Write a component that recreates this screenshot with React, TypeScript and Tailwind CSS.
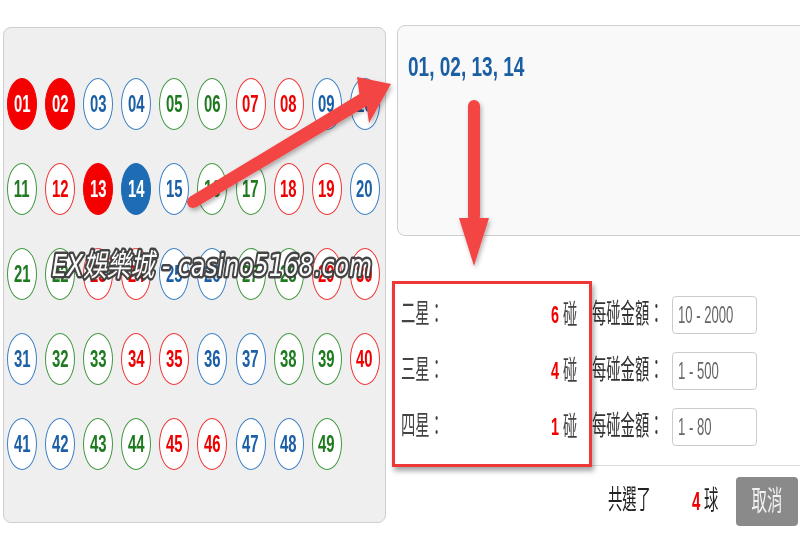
import React from "react";

const RED = [1, 2, 7, 8, 12, 13, 18, 19, 23, 24, 29, 30, 34, 35, 40, 45, 46];
const BLUE = [3, 4, 9, 10, 14, 15, 20, 25, 26, 31, 36, 37, 41, 42, 47, 48];
const SELECTED = [1, 2, 13, 14];

function C({ children, className }: { children: React.ReactNode; className?: string }) {
  return (
    <span className={"inline-block origin-left scale-x-[0.53] whitespace-nowrap text-[27px] leading-none " + (className ?? "")}>
      {children}
    </span>
  );
}

function D({ children, className }: { children: React.ReactNode; className?: string }) {
  return (
    <span className={"inline-block origin-left scale-x-[0.6] whitespace-nowrap leading-none " + (className ?? "")}>
      {children}
    </span>
  );
}

function Ball({ n }: { n: number }) {
  const color = RED.includes(n) ? "red" : BLUE.includes(n) ? "blue" : "green";
  const sel = SELECTED.includes(n);
  let cls = "";
  if (sel) {
    cls = color === "red" ? "bg-[#f50000] border-[#f50000] text-white" : "bg-[#1d6cb4] border-[#1d6cb4] text-white";
  } else {
    cls =
      color === "red"
        ? "bg-white border-[#f03535] text-[#f00000]"
        : color === "blue"
        ? "bg-white border-[#3b80c6] text-[#1b5fa6]"
        : "bg-white border-[#41983f] text-[#1e7a1e]";
  }
  return (
    <div className={"flex h-[52px] w-[30px] items-center justify-center rounded-[50%] border-[1.5px] " + cls}>
      <span className="inline-block scale-x-[0.62] text-[24px] font-bold leading-none">{String(n).padStart(2, "0")}</span>
    </div>
  );
}

const rows = [
  { label: "二星：", count: "6", range: "10 - 2000" },
  { label: "三星：", count: "4", range: "1 - 500" },
  { label: "四星：", count: "1", range: "1 - 80" },
];

export default function App() {
  const nums = Array.from({ length: 49 }, (_, i) => i + 1);
  return (
    <div className="relative flex h-[533px] w-[800px] items-start overflow-hidden bg-white font-['Liberation_Sans','Noto_Sans_CJK_TC',sans-serif] text-[#333]">
      {/* Left number panel */}
      <div className="ml-[3px] mt-[27px] h-[496px] w-[383px] shrink-0 rounded-[8px] border border-[#cfcfcf] bg-[#efefef] pl-[3px] pt-[50px]">
        <div className="grid grid-cols-[repeat(10,30px)] gap-x-[8.1px] gap-y-[33px]">
          {nums.map((n) => (
            <Ball key={n} n={n} />
          ))}
        </div>
      </div>

      {/* Right column */}
      <div className="ml-[6px] mt-[25px] flex w-[408px] shrink-0 flex-col">
        <div className="ml-[5px] h-[211px] w-[420px] shrink-0 rounded-[8px] border border-[#cfcfcf] bg-[#f9f9f9] pl-[10px] pt-[25px]">
          <span className="inline-block origin-left scale-x-[0.68] whitespace-nowrap text-[28px] font-bold leading-[32px] text-[#1b5fa3]">
            01, 02, 13, 14
          </span>
        </div>

        <div className="mt-[60px] flex flex-col gap-[18px] border-b border-[#dcdcdc] pb-[19px] pl-[9px]">
          {rows.map((r) => (
            <div key={r.label} className="flex h-[38px] items-center">
              <div className="w-[150px]">
                <C className="text-[#444]">{r.label}</C>
              </div>
              <div className="flex w-[41px] items-center">
                <D className="w-[12px] text-[24px] font-bold text-[#f00000]">{r.count}</D>
                <C className="text-[#444]">碰</C>
              </div>
              <div className="w-[80px]">
                <C className="text-[#333]">每碰金額：</C>
              </div>
              <div className="flex h-[38px] w-[85px] items-center rounded-[4px] border border-[#cccccc] bg-white pl-[5px]">
                <span className="inline-block origin-left scale-x-[0.57] whitespace-nowrap text-[23px] leading-none text-[#666]">{r.range}</span>
              </div>
            </div>
          ))}
        </div>

        <div className="mt-[11px] flex items-center pl-[216px]">
          <div className="w-[84px]">
            <C className="text-[#222]">共選了</C>
          </div>
          <div className="flex w-[44px] items-center">
            <D className="w-[12px] text-[25px] font-bold text-[#f00000]">4</D>
            <C className="text-[#222]">球</C>
          </div>
          <div className="flex h-[49px] w-[62px] items-center justify-center rounded-[4px] bg-[#8a8a8a]">
            <span className="inline-block scale-x-[0.55] whitespace-nowrap text-[28px] leading-none text-[#f2f2f2]">取消</span>
          </div>
        </div>
      </div>

      {/* Annotation: red highlight box */}
      <div className="pointer-events-none absolute left-[392px] top-[281px] h-[186px] w-[200px] border-[3px] border-[#ee3838] shadow-[2px_4px_5px_rgba(0,0,0,0.35)]" />

      {/* Annotation arrows and watermark */}
      <svg className="pointer-events-none absolute left-0 top-0" width="800" height="533" viewBox="0 0 800 533">
        <defs>
          <filter id="sh" x="-20%" y="-20%" width="140%" height="140%">
            <feDropShadow dx="1.5" dy="2.5" stdDeviation="2" floodColor="#000" floodOpacity="0.3" />
          </filter>
        </defs>
        <g fill="#f44444" filter="url(#sh)">
          <path d="M189.9 196.8 L359.4 94 L357 77 L391 84 L369 123 L366.6 106 L196.1 207.2 Z" />
          <circle cx="193" cy="202" r="6" />
          <rect x="468" y="100" width="12" height="122" rx="6" />
          <path d="M459 218 L489 218 L474 266 Z" />
        </g>
        <text
          x="52"
          y="276"
          fontSize="31"
          fontStyle="italic"
          fontFamily="'DejaVu Sans','Noto Sans CJK TC',sans-serif"
          fill="#ffffff"
          stroke="#3c3c3c"
          strokeWidth="5"
          strokeLinejoin="round"
          paintOrder="stroke"
          textLength="320"
          lengthAdjust="spacingAndGlyphs"
          opacity="0.95"
        >
          EX娛樂城 - casino5168.com
        </text>
      </svg>
    </div>
  );
}
